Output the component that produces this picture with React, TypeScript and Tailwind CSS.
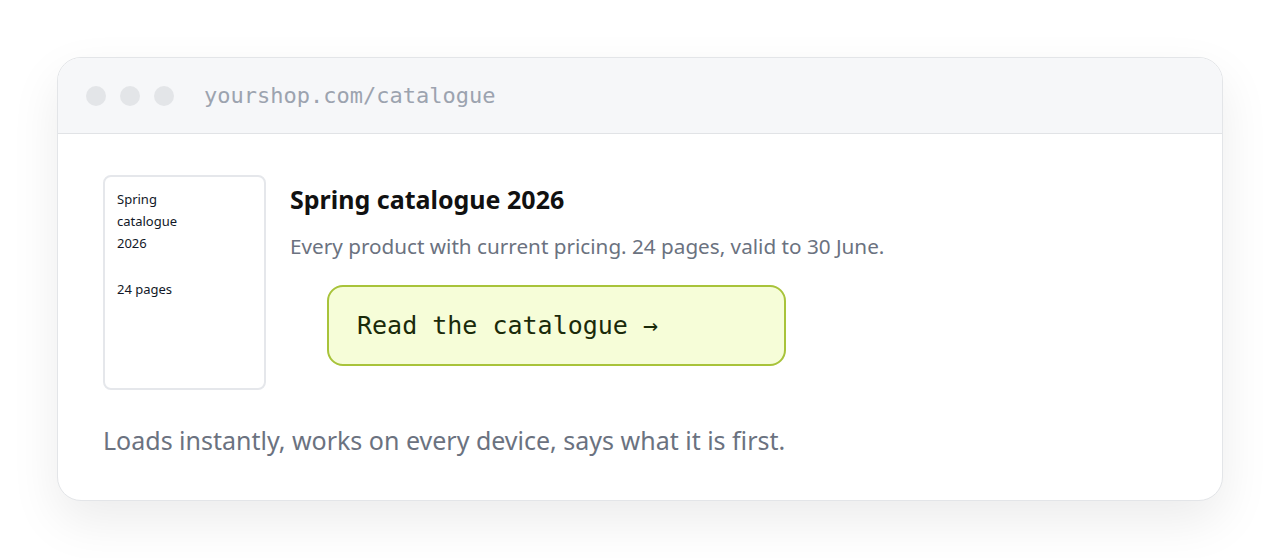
export default function App() {
  const sans = { fontFamily: '"Noto Sans", "Open Sans", sans-serif' };
  return (
    <div className="min-h-[558px] bg-white pt-[57px] px-[57px]" style={sans}>
      <div className="rounded-[24px] border border-[#e3e5e8] bg-white overflow-hidden shadow-[0_20px_50px_rgba(0,0,0,0.08)]">
        {/* browser bar */}
        <div className="h-[76px] bg-[#f6f7f9] border-b border-[#e1e3e6] flex items-center pl-[28px]">
          <div className="flex gap-[14px]">
            <span className="w-[20px] h-[20px] rounded-full bg-[#e3e5e8]" />
            <span className="w-[20px] h-[20px] rounded-full bg-[#e3e5e8]" />
            <span className="w-[20px] h-[20px] rounded-full bg-[#e3e5e8]" />
          </div>
          <span className="ml-[30px] text-[22px] text-[#9ca3af]" style={{ fontFamily: '"DejaVu Sans Mono", "Liberation Mono", monospace' }}>
            yourshop.com/catalogue
          </span>
        </div>

        {/* content */}
        <div className="px-[45px] pt-[41px] pb-[42px]">
          <div className="flex gap-[24px]">
            <div className="w-[163px] h-[215px] shrink-0 rounded-[8px] border-2 border-[#e5e7eb] px-[12px] pt-[11px] text-[13px] leading-[22px] text-[#111827]">
              <p className="w-[80px]">Spring catalogue 2026</p>
              <p className="mt-[24px]">24 pages</p>
            </div>
            <div className="pt-[7px]">
              <h2 className="text-[25px] font-bold text-[#111111] leading-[34px]">Spring catalogue 2026</h2>
              <p className="mt-[16px] text-[20.7px] text-[#6b7280] leading-[28px]">
                Every product with current pricing. 24 pages, valid to 30 June.
              </p>
              <button className="mt-[25px] ml-[37px] w-[459px] h-[81px] rounded-[16px] border-2 border-[#a8c33a] bg-[#f6fdd8] text-left pl-[28px] text-[25px] text-[#1a2a0a]" style={{ fontFamily: '"DejaVu Sans Mono", "Liberation Mono", monospace' }}>
                Read the catalogue →
              </button>
            </div>
          </div>
          <p className="mt-[32px] text-[25px] text-[#6b7280] leading-[36px]">
            Loads instantly, works on every device, says what it is first.
          </p>
        </div>
      </div>
    </div>
  );
}
